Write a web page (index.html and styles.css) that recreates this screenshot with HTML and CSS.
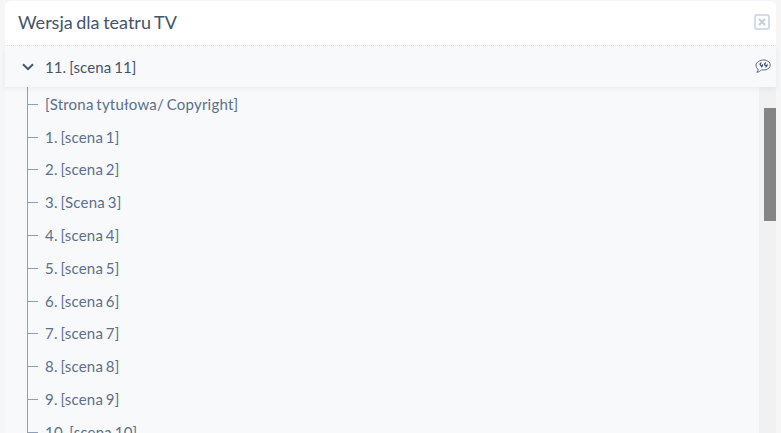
FILE: index.html
```html
<!DOCTYPE html>
<html lang="en">
<head>
    <meta charset="UTF-8">
    <title>Wersja dla teatru TV</title>
    <link rel="stylesheet" href="styles.css">
</head>
<body>
<div class="panel">
    <div class="panel-head">
        <h2>Wersja dla teatru TV</h2>
        <span class="close-btn">
            <svg width="8" height="8" viewBox="0 0 8 8"><path d="M1 1l6 6M7 1L1 7" stroke="#c5cfdf" stroke-width="2.200" fill="none"/></svg>
        </span>
    </div>
    <div class="current">
        <svg class="chevron" width="12" height="8" viewBox="0 0 12 8"><path d="M1 1.200l5 5 5-5" stroke="#44546a" stroke-width="2" fill="none"/></svg>
        <span class="current-name">11. [scena 11]</span>
        <svg class="quote" width="16" height="15" viewBox="0 0 16 15">
            <path d="M8.800 1c3.400 0 6.400 2 6.400 5s-3 5-6.400 5c-.8 0-1.500-.1-2.200-.3-1 1.300-2.900 2.300-4.800 2.600.8-.8 1.300-2 1.400-3.200C1.900 9.900 1 8 1 6 1 3 5.400 1 8.800 1z" stroke="#5a6b85" stroke-width="1" fill="none"/>
            <path d="M6.500 3.800a1.400 1.400 0 1 0 0 2.800c.4 0 .8-.1 1-.3 0 1-.6 1.500-1.500 1.700M11 3.800a1.400 1.400 0 1 0 0 2.800c.4 0 .8-.1 1-.3 0 1-.6 1.500-1.500 1.700" stroke="#44546a" stroke-width="1.300" fill="none"/>
        </svg>
    </div>
    <div class="tree-wrap">
        <ul class="tree">
            <li>[Strona tytułowa/ Copyright]</li>
            <li>1. [scena 1]</li>
            <li>2. [scena 2]</li>
            <li>3. [Scena 3]</li>
            <li>4. [scena 4]</li>
            <li>5. [scena 5]</li>
            <li>6. [scena 6]</li>
            <li>7. [scena 7]</li>
            <li>8. [scena 8]</li>
            <li>9. [scena 9]</li>
            <li>10. [scena 10]</li>
        </ul>
        <div class="scroll-track"><div class="scroll-thumb"></div></div>
    </div>
</div>
</body>
</html>
```
FILE: styles.css
```css
html, body {
    height: 100%;
}

body {
    margin: 0;
    padding: 1px 5px 0;
    box-sizing: border-box;
    overflow: hidden;
    font-family: Lato, "Open Sans", sans-serif;
    background-color: #f6f6f7;
}

.panel {
    height: 100%;
    display: flex;
    flex-direction: column;
    background: #f8f9fb;
    border-radius: 6px 6px 0 0;
}

.panel-head {
    height: 45px;
    flex: none;
    display: flex;
    align-items: center;
    justify-content: space-between;
    padding: 0 6px 3px 13px;
    box-sizing: border-box;
    background: white;
    border-bottom: 1px dotted #dfe3e9;
    border-radius: 6px 6px 0 0;
}

.panel-head h2 {
    margin: 0;
    font-size: 18px;
    font-weight: 400;
    word-spacing: -1px;
    color: #44546a;
}

.close-btn {
    width: 12px;
    height: 12px;
    display: flex;
    align-items: center;
    justify-content: center;
    border: 2px solid #d5dce8;
    border-radius: 3px;
}

.current {
    height: 41px;
    flex: none;
    display: flex;
    align-items: center;
    padding: 0 5px 0 17px;
    background: #f8f9fb;
    box-shadow: 0 2px 5px rgba(0, 0, 0, 0.06);
    position: relative;
    color: #44546a;
    font-size: 15px;
    letter-spacing: 0.1px;
    word-spacing: -1px;
}

.current-name {
    margin-left: 11px;
    flex: 1;
}

.tree-wrap {
    flex: 1;
    min-height: 0;
    display: flex;
    overflow: hidden;
}

.tree {
    flex: 1;
    margin: 0 0 0 22px;
    padding: 0.850px 0 0;
    list-style: none;
    border-left: 1px solid #8f9fb8;
    align-self: flex-start;
}

.tree li {
    height: 32.800px;
    line-height: 32.800px;
    padding-left: 17px;
    font-size: 15px;
    letter-spacing: 0.21px;
    word-spacing: -1.300px;
    color: #5c6f8c;
    position: relative;
}

.tree li::before {
    content: "";
    position: absolute;
    left: 0;
    top: 16px;
    width: 10px;
    height: 1px;
    background: #8f9fb8;
}

.scroll-track {
    width: 17px;
    flex: none;
    padding: 21px 0 0 5px;
    box-sizing: border-box;
    background: #f1f1f1;
}

.scroll-thumb {
    height: 113px;
    background: #858585;
}
```
